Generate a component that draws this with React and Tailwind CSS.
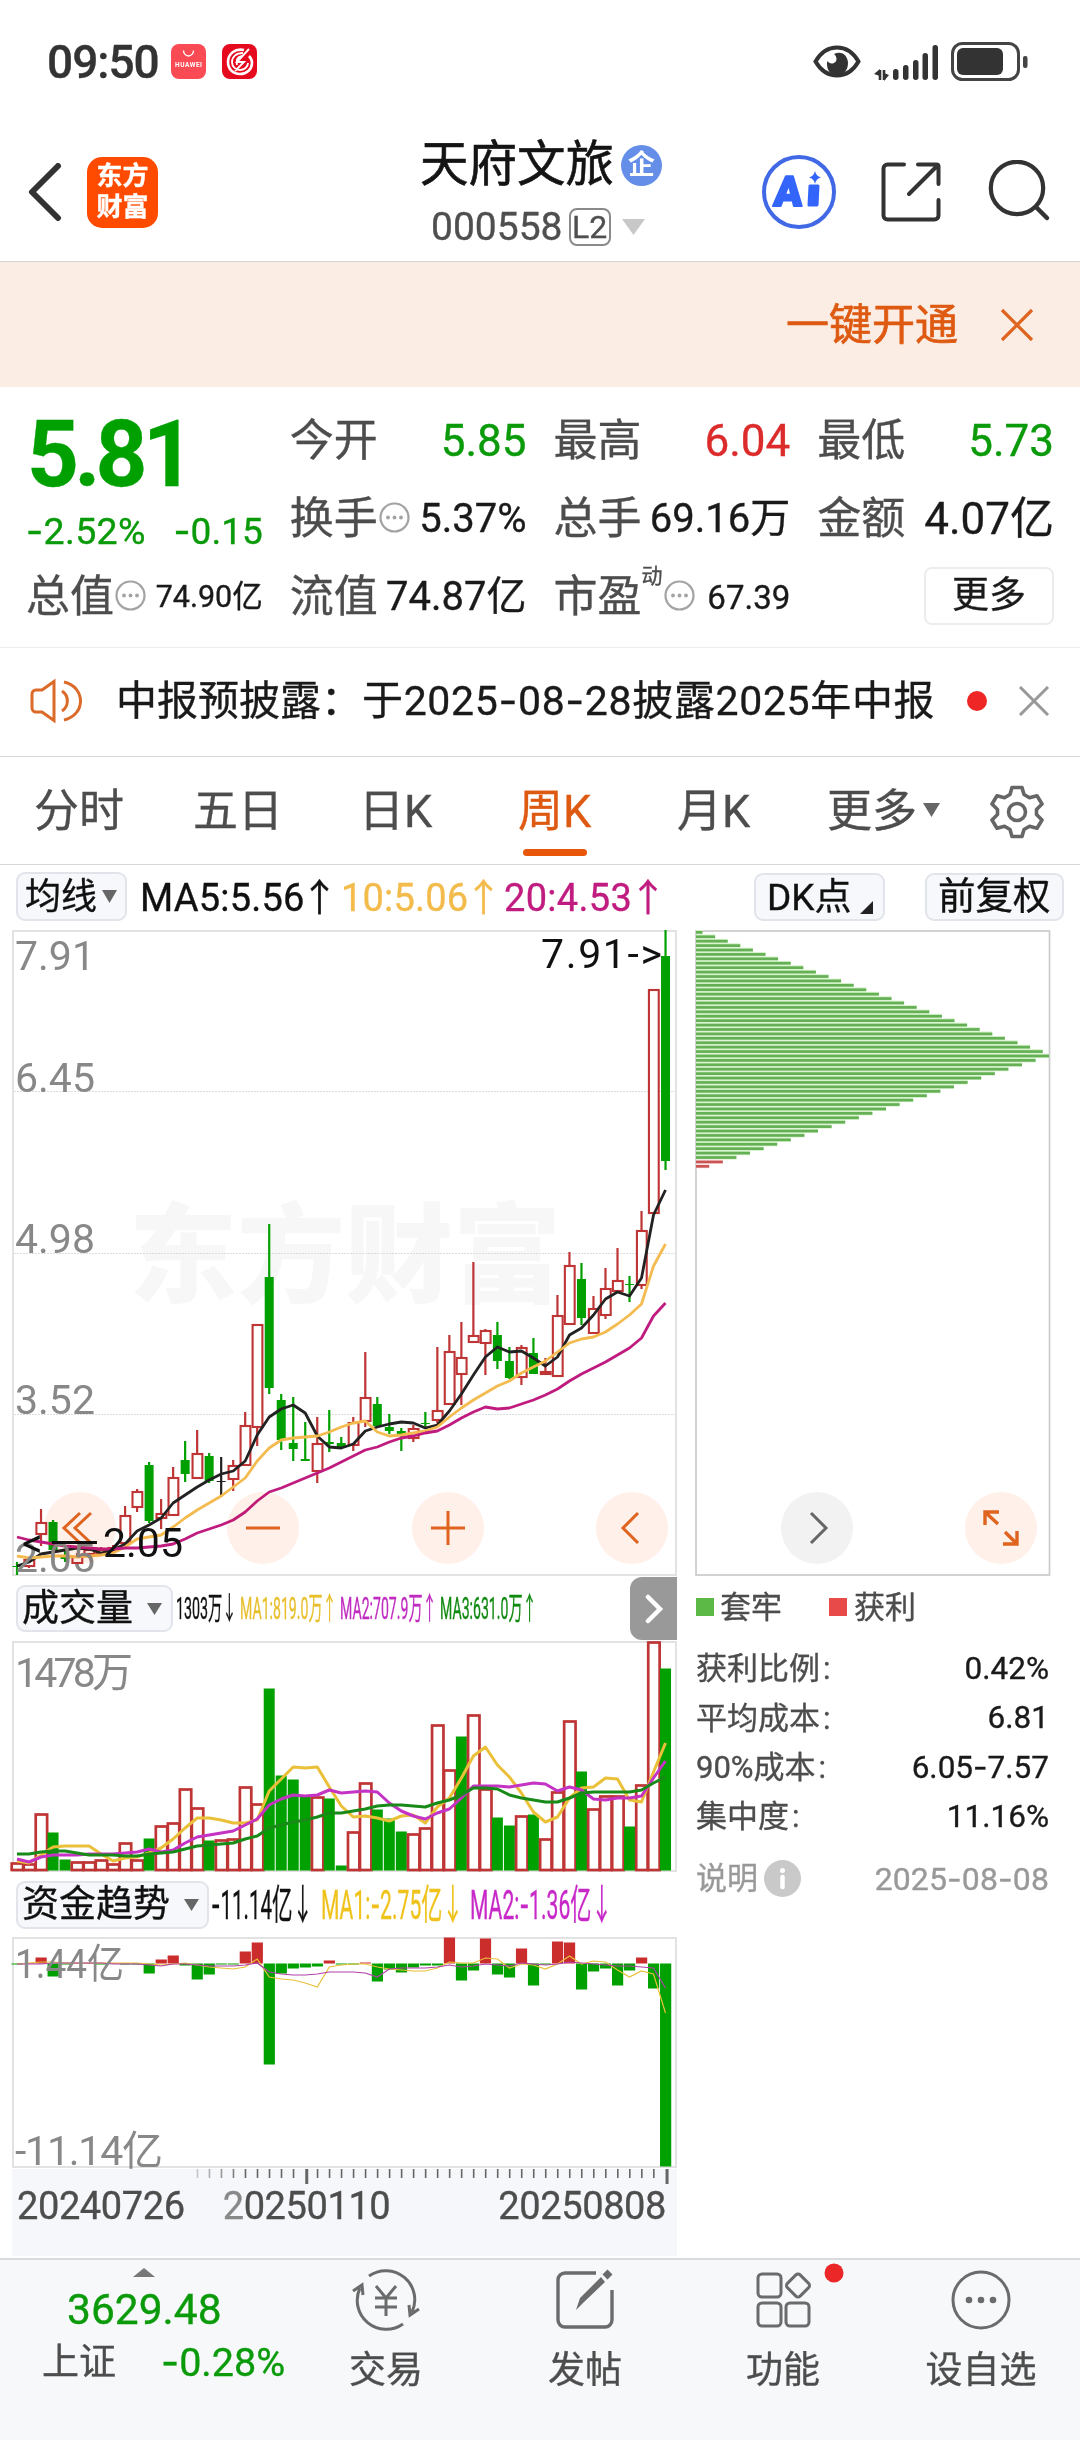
const UP = '#bf3434';
const DOWN = '#00a000';
const STEP = 12.01;

const px = (i) => 5 + i * STEP;
const toLine = (ys) => ys.map((y, i) => `${px(i).toFixed(1)},${y}`).join(' ');

// high, body top, body bottom, low
const candles = [
    [632, 636, 637, 645], [627, 629, 636, 638], [579, 592, 604, 616], [590, 592, 620, 621], [620, 625, 629, 632],
    [623, 626, 633, 635], [617, 619, 624, 626], [617, 619, 623, 626], [615, 617, 620, 624], [576, 585, 613, 616],
    [559, 561, 577, 582], [532, 535, 591, 593], [569, 583, 588, 599], [537, 547, 585, 586], [511, 530, 544, 552],
    [500, 523, 548, 549], [523, 526, 551, 553], [527, 551, 552, 567], [530, 535, 549, 561], [482, 495, 535, 536],
    [394, 394, 497, 516], [294, 347, 458, 464], [464, 470, 510, 520], [467, 513, 519, 531], [492, 529, 531, 531],
    [487, 513, 541, 553], [480, 512, 514, 522], [507, 513, 517, 519], [487, 492, 515, 521], [422, 467, 491, 497],
    [467, 474, 496, 498], [484, 497, 501, 504], [498, 501, 504, 521], [495, 498, 508, 512], [482, 493, 494, 497],
    [417, 480, 490, 493], [405, 421, 474, 475], [392, 427, 444, 475], [332, 405, 412, 413], [399, 400, 413, 445],
    [392, 405, 431, 439], [417, 431, 448, 449], [415, 417, 447, 455], [408, 423, 444, 444], [428, 441, 444, 445],
    [365, 385, 446, 446], [322, 335, 394, 394], [333, 349, 388, 395], [366, 378, 403, 404], [338, 358, 385, 389],
    [318, 350, 361, 361], [346, 354, 355, 372], [281, 300, 355, 359], [59, 59, 283, 283], [0, 26, 231, 240],
];
// r = up, g = down, k = unchanged
const candleKinds = 'grrggrrrrrrgrrgrgkrrrggggrggrrgggrgrrrrrggrgrrrgrrrgrrg';

const ma5 = [636, 632, 624, 622, 620, 618, 619, 623, 620, 614, 601, 595, 588, 573, 565, 557, 550, 544, 541, 531, 505, 487, 479, 475, 483, 506, 517, 518, 514, 501, 497, 494, 492, 493, 498, 495, 481, 464, 445, 427, 417, 422, 421, 428, 436, 427, 405, 398, 385, 369, 362, 366, 348, 285, 260];
const ma10 = [626, 628, 627, 626, 626, 627, 626, 625, 623, 617, 609, 607, 605, 597, 588, 580, 573, 566, 557, 548, 531, 518, 510, 508, 507, 506, 502, 497, 493, 491, 502, 506, 505, 503, 501, 497, 487, 478, 470, 463, 456, 451, 443, 437, 431, 422, 413, 409, 407, 402, 394, 385, 374, 336, 314];
const ma20 = [607, 610, 612, 614, 616, 617, 618, 619, 619, 618, 618, 617, 616, 614, 609, 603, 599, 595, 590, 582, 571, 562, 558, 553, 548, 543, 538, 532, 526, 520, 517, 512, 508, 506, 503, 501, 495, 488, 482, 477, 479, 478, 474, 470, 465, 459, 451, 444, 438, 432, 425, 418, 408, 386, 373];

const volumes = [8, 7, 57, 38, 11, 9, 9, 11, 7, 28, 11, 32, 45, 48, 82, 63, 30, 31, 32, 84, 67, 182, 95, 91, 75, 74, 72, 5, 39, 88, 61, 52, 39, 37, 43, 146, 101, 134, 156, 82, 53, 45, 55, 56, 32, 79, 150, 99, 62, 75, 75, 44, 86, 229, 202];
const volumeKinds = 'rrrggrrrrrrgrrrrgrrrrggggrggrrgggrrrrgrrggrgrrrgrrrgrrg';
const volMa1 = [220, 222, 214, 206, 205, 205, 205, 213, 220, 217, 216, 212, 207, 198, 187, 177, 177, 179, 182, 182, 179, 150, 138, 126, 127, 126, 146, 165, 176, 175, 177, 180, 175, 174, 182, 166, 157, 137, 115, 106, 124, 136, 152, 171, 181, 176, 157, 147, 146, 137, 138, 159, 161, 131, 102];
const volMa2 = [218, 221, 216, 214, 214, 214, 213, 213, 213, 212, 211, 208, 211, 209, 202, 196, 194, 192, 190, 184, 178, 164, 158, 154, 155, 154, 149, 152, 151, 150, 151, 162, 170, 175, 178, 172, 168, 157, 145, 145, 145, 146, 144, 142, 143, 150, 146, 149, 158, 159, 157, 157, 155, 137, 120];
const volMa3 = [213, 213, 211, 210, 210, 212, 214, 214, 214, 215, 215, 213, 212, 211, 208, 205, 204, 203, 202, 198, 195, 187, 184, 181, 179, 176, 172, 172, 170, 168, 165, 164, 164, 165, 166, 162, 159, 154, 147, 147, 148, 154, 157, 159, 161, 161, 157, 152, 151, 151, 151, 151, 149, 142, 136];

const flows = [-1, 0.5, 6, -13, -1, 0.5, 0.5, -1, 0.5, -1, -1, -10, 4, 8, -2, -16, -11, -1, -1, 12, 21, -101, -10, -5, -4, -3, 3, -1, -1, 1, -18, -6, -9, -4, -2, -2, 26, -17, -7, 25, -11, -14, 15, -22, -1, 22, 21, -26, -8, -5, -22, -7, 6, -25, -203];
const flowMa1 = [27, 26, 25, 25, 26, 26, 26, 26, 26, 26, 26, 27, 28, 27, 26, 28, 30, 31, 32, 30, 22, 40, 42, 43, 46, 50, 30, 28, 27, 27, 30, 32, 33, 34, 34, 31, 25, 26, 26, 21, 22, 31, 27, 28, 32, 27, 19, 27, 24, 25, 33, 40, 34, 37, 76];
const flowMa2 = [27, 27, 27, 26, 26, 26, 26, 26, 27, 27, 27, 28, 29, 27, 27, 28, 29, 29, 29, 28, 26, 35, 37, 38, 38, 37, 35, 35, 35, 36, 40, 32, 31, 31, 31, 30, 28, 30, 29, 27, 28, 29, 26, 27, 28, 27, 25, 26, 27, 28, 29, 29, 30, 31, 51];

// chip distribution: rises to bar 28, then falls off
const chips = Array.from({ length: 54 }, (_, i) => (i < 28 ? 6.5 + i * 12.6 : i === 28 ? 353 : 339.6 - (i - 29) * 13.6));

const stats = [
    ['获利比例', '0.42%'],
    ['平均成本', '6.81'],
    ['90%成本', '6.05-7.57'],
    ['集中度', '11.16%'],
];

// hyphens are drawn wider than Roboto's own
const Num = ({ children }) =>
    children.split(/(-)/).map((part, i) => (part === '-' ? <span key={i} className="font-['Inter']">-</span> : part));

const Dots = () => (
    <svg width="31" height="31" viewBox="0 0 31 31" className="shrink-0">
        <circle cx="15.5" cy="15.5" r="14" fill="none" stroke="#a3a3a3" strokeWidth="2.2" />
        {[9, 15.5, 22].map((x) => <circle key={x} cx={x} cy="15.5" r="1.9" fill="#a3a3a3" />)}
    </svg>
);

const Caret = ({ w = 15, h = 12, color = '#666' }) => (
    <svg width={w} height={h} viewBox="0 0 10 10" preserveAspectRatio="none" className="shrink-0">
        <path d="M0 0H10L5 10Z" fill={color} />
    </svg>
);

const StatusBar = () => (
    <div className="h-[123px] flex items-center pl-[47px] pr-[52px] text-[#333]">
        <span className="text-[46px] leading-none font-medium w-[124px] tracking-[-1px]">09:50</span>
        <svg width="35" height="35" viewBox="0 0 35 35">
            <rect width="35" height="35" rx="8" fill="#fa4b55" />
            <path d="M12.500 6.500a5 5.500 0 0 0 10 0" fill="none" stroke="#fff" strokeWidth="1.300" />
            <text x="4" y="22.500" fontSize="6.500" fontWeight="700" fill="#fff" textLength="27">HUAWEI</text>
        </svg>
        <svg width="35" height="35" viewBox="0 0 35 35" className="ml-4">
            <rect width="35" height="35" rx="8" fill="#e60a1e" />
            <path d="M22 6C13 4 6 10 6 18c0 7 5 12 12 12 7 0 12-5 12-11 0-3-1-5-3-7" fill="none" stroke="#fff" strokeWidth="2.600" />
            <path d="M21 9c-7 0-11 4-11 9s4 8 8 8 8-3 8-7M27 5 15 18h7l-9 9M20 12c-5 1-6 4-5 9" fill="none" stroke="#fff" strokeWidth="1.900" />
        </svg>
        <div className="flex items-center ml-auto">
            <svg width="48" height="33" viewBox="0 0 48 33">
                <path d="M2.500 16.500C8 7 15 2.500 24 2.500s16 4.500 21.500 14C40 26 33 30.500 24 30.500S8 26 2.500 16.500Z" fill="none" stroke="#333" strokeWidth="4" />
                <path d="M21 9c8-4 14 2 14 9 0 8-5 12-11 12s-10-4-10-11c0-1 0-2 .5-3 2 4 9 3 9-2 0-2-1-4-2.500-5Z" fill="#333" />
            </svg>
            <svg width="66" height="37" viewBox="0 0 66 37" className="ml-[13px] mt-px">
                <path d="M6 36V26M10 26V36" fill="none" stroke="#333" strokeWidth="2.600" />
                <path d="M6 25V32L0 30ZM10 37V29L15 31Z" fill="#333" />
                {[[19, 25], [29, 21], [39, 16], [48.5, 9], [58.500, 1]].map(([x, y]) => (
                    <rect key={x} x={x} y={y} width="5.500" height={36 - y} rx="2.700" fill="#333" />
                ))}
            </svg>
            <svg width="78" height="39" viewBox="0 0 78 39" className="ml-[11px] -mr-px">
                <rect x="1.500" y="1.500" width="66" height="36" rx="10" fill="none" stroke="#444" strokeWidth="3" />
                <rect x="6" y="6" width="46" height="27" rx="6" fill="#333" />
                <rect x="72" y="14" width="4.500" height="12" rx="2" fill="#444" />
            </svg>
        </div>
    </div>
);

const Header = () => (
    <div className="h-[139px] flex items-center pl-[28px] border-b border-[#d0d4d6]">
        <svg width="34" height="58" viewBox="0 0 34 58">
            <path d="M30 3 4 29 30 55" fill="none" stroke="#333" strokeWidth="6" strokeLinecap="round" strokeLinejoin="round" />
        </svg>
        <div className="ml-[25px] w-[71px] h-[71px] rounded-[15px] bg-[#ff4b00] flex flex-col items-center justify-center text-white text-[26px] leading-[31px] font-bold">
            <span>东方</span>
            <span>财富</span>
        </div>
        <div className="ml-[262px] w-[260px] h-[134px] pt-[6px]">
            <div className="h-16 pt-1 flex items-center gap-[7px] text-[48.500px] leading-none text-[#141414] [-webkit-text-stroke:0.6px_#141414]">
                天府文旅
                <span className="w-[41px] h-[41px] rounded-full bg-[#658ee8] flex items-center justify-center text-white text-[27px] font-bold [-webkit-text-stroke:0]">企</span>
            </div>
            <div className="h-16 flex items-center pl-[11px] text-[39px] leading-none text-[#4f4f4f]">
                000558
                <span className="ml-[6px] w-[42px] h-[38px] border-2 border-[#8a8a8a] rounded-[8px] flex items-center justify-center text-[32px]">L2</span>
                <span className="ml-[11px]"><Caret w={23} h={16} color="#c8c8c8" /></span>
            </div>
        </div>
        <svg width="76" height="76" viewBox="0 0 76 76" className="ml-[81px]">
            <circle cx="38" cy="38" r="35" fill="none" stroke="#4169e6" strokeWidth="4" />
            <g fill="#3465fa" stroke="#3465fa" strokeLinejoin="round">
                <text x="13" y="52" fontSize="42" fontWeight="900" strokeWidth="2" textLength="31" transform="translate(38 38) skewX(-4) translate(-38 -38)">A</text>
                <path d="M49 32H57L56 51H48Z" strokeWidth="3" />
                <path d="M54 17q1 5 6 6.500-5 1-6 6.500-1-5.500-6-6.500 5-1.500 6-6.500Z" strokeWidth="0" />
            </g>
        </svg>
        <svg width="62" height="62" viewBox="0 0 62 62" className="ml-[43px]">
            <path d="M24 3.500H7.500a4 4 0 0 0-4 4v47a4 4 0 0 0 4 4H54.500a4 4 0 0 0 4-4V39M38 3.500H56.500a2 2 0 0 1 2 2V23M57 5 29 33" fill="none" stroke="#333" strokeWidth="4" strokeLinecap="round" />
        </svg>
        <svg width="64" height="64" viewBox="0 0 64 64" className="ml-[45px]">
            <circle cx="30" cy="28" r="26.200" fill="none" stroke="#333" strokeWidth="4.200" />
            <path d="M49 47 60 58" stroke="#333" strokeWidth="4.500" strokeLinecap="round" />
        </svg>
    </div>
);

const Quote = ({ label, value, icon, sup, cls }) => (
    <div className="flex items-center justify-between leading-none">
        <span className="-ml-px flex items-center text-[44px] text-[#4d4d4d] whitespace-nowrap">
            {label}
            {sup && <span className="text-[21px] self-start -mt-[9px]">{sup}</span>}
            {icon && <span className="ml-[1px] -mt-[3px]"><Dots /></span>}
        </span>
        <span className={`whitespace-nowrap ${cls}`}>{value}</span>
    </div>
);

const Quotes = () => (
    <div className="h-[261px] pt-[15px] pl-[27px] pr-[26px] grid grid-cols-4 grid-rows-[78px_78px_78px] gap-x-7 border-b border-[#ececec]">
        <div className="row-span-2 text-[#0a9a0a] leading-none">
            <div className="h-[104px] flex items-center origin-left scale-x-[.975] text-[93px] font-bold tracking-[-5px] text-[#00a000]">5.81</div>
            <div className="h-[50px] flex items-center justify-between text-[37px]">
                <span className="-ml-px text-[37.500px] tracking-[0.3px]"><Num>-2.52%</Num></span>
                <span><Num>-0.15</Num></span>
            </div>
        </div>
        <Quote label="今开" value="5.85" cls="text-[44px] text-[#0a9a0a]" />
        <Quote label="最高" value="6.04" cls="text-[44px] text-[#db2b2b]" />
        <Quote label="最低" value="5.73" cls="text-[44px] text-[#0a9a0a]" />
        <Quote label="换手" icon value="5.37%" cls="text-[40px] text-[#1a1a1a]" />
        <Quote label="总手" value="69.16万" cls="text-[40px] text-[#1a1a1a]" />
        <Quote label="金额" value="4.07亿" cls="text-[44px] text-[#1a1a1a]" />
        <Quote label="总值" icon value="74.90亿" cls="text-[30.500px] text-[#1a1a1a]" />
        <Quote label="流值" value="74.87亿" cls="text-[40px] text-[#1a1a1a]" />
        <Quote label="市盈" sup="动" icon value="67.39" cls="text-[33px] text-[#1a1a1a]" />
        <div className="flex items-center justify-end">
            <button className="w-[130px] h-[58px] -mt-[3px] rounded-[8px] border-2 border-[#ebeced] text-[37px] leading-none text-[#1a1a1a]">更多</button>
        </div>
    </div>
);

const News = () => (
    <div className="h-[109px] pb-[2px] flex items-center pl-[30px] pr-[30px] border-b border-[#d8d8d8]">
        <svg width="54" height="44" viewBox="0 0 54 44">
            <path d="M24 2.500 12 11H6a4 4 0 0 0-4 4v14a4 4 0 0 0 4 4h6l12 8.500ZM32 12a12 12 0 0 1 0 20M34 3c22 5 22 33 0 38" fill="none" stroke="#dc6a28" strokeWidth="3" />
        </svg>
        <span className="ml-[32px] w-[819px] text-[41px] leading-none text-[#1a1a1a] whitespace-nowrap">
            中报预披露：<span className="tracking-[0.65px]"><Num>于2025-08-28披露2025年中报</Num></span>
        </span>
        <span className="ml-[32px] w-5 h-5 rounded-full bg-[#ef2626]" />
        <svg width="32" height="30" viewBox="0 0 32 30" className="ml-auto">
            <path d="M2 1 30 29M30 1 2 29" stroke="#999" strokeWidth="3" />
        </svg>
    </div>
);

const Gear = () => (
    <svg width="54" height="54" viewBox="0 0 54 54" fill="none" stroke="#666" strokeWidth="3.600" strokeLinejoin="round">
        <path d="M22 2.500h10l2 7 5.500 3.200 7.500-2 5 8.300-5.500 5.500v5l5.500 5.500-5 8.300-7.500-2-5.500 3.200-2 7H22l-2-7-5.500-3.200-7.500 2-5-8.300 5.500-5.500v-5L2 19l5-8.300 7.500 2L20 9.500Z" />
        <circle cx="27" cy="27" r="8.500" />
    </svg>
);

const Tabs = () => (
    <div className="h-[108px] pt-[2px] flex items-center text-[45px] leading-none text-[#4d4d4d] border-b border-[#d8d8d8] whitespace-nowrap">
        <span className="ml-[34px] w-[159px]">分时</span>
        <span className="w-[166px]">五日</span>
        <span className="w-[159px]">日K</span>
        <span className="w-[159px] h-full flex items-center relative text-[#de5a12]">
            周K
            <i className="absolute left-[5px] bottom-[8px] w-[64px] h-[7px] rounded-full bg-[#e8560a]" />
        </span>
        <span className="w-[150px]">月K</span>
        <span className="w-[163px] flex items-center gap-[6px]">更多<span className="-mt-[3px]"><Caret w={17} h={14} /></span></span>
        <Gear />
    </div>
);

const chip = 'shrink-0 flex items-center border-2 border-[#e1e4ea] bg-[#f6f8fb] rounded-[9px] leading-none text-[#111] whitespace-nowrap';

const Averages = () => (
    <div className="h-[65px] pt-[7px] pl-4 flex items-start text-[38px]">
        <div className={`${chip} w-[111px] h-[49px] pl-[7px] gap-[5px] text-[36px]`}>均线<Caret w={15} h={13} /></div>
        <div className="ml-[13px] w-[613px] h-[51px] flex items-center leading-none whitespace-nowrap">
            <span className="w-[201px] text-[#111] tracking-[0.2px]">MA5:5.56<i className="not-italic -ml-[4px]">↑</i></span>
            <span className="w-[163px] text-[#f3bb4b] tracking-[0.2px]">10:5.06<i className="not-italic -ml-[4px]">↑</i></span>
            <span className="text-[#c01c80] tracking-[0.3px]">20:4.53<i className="not-italic -ml-[3px]">↑</i></span>
        </div>
        <div className="ml-px flex mt-px">
            <div className={`${chip} w-[131px] h-[48px] pl-[11px] text-[37px]`}>
                DK点
                <svg width="13" height="13" viewBox="0 0 13 13" className="self-end mb-[5px] ml-[8px]"><path d="M13 0V13H0Z" fill="#222" /></svg>
            </div>
            <div className={`${chip} ml-10 w-[139px] h-[48px] pl-[11px] text-[37.500px]`}>前复权</div>
        </div>
    </div>
);

const Frame = ({ h }) => <rect x="1" y="1" width="663" height={h - 2} fill="none" stroke="#e2e2e2" strokeWidth="2" />;

const CandleChart = () => (
    <svg width="665" height="646" className="block overflow-visible" fontFamily="Roboto, 'Noto Sans CJK SC', sans-serif">
        <text x="117" y="364" fontSize="108" fontWeight="900" fill="#f7f7f7">东方财富</text>
        <Frame h={646} />
        {[161.5, 323.5, 484.5].map((y) => <path key={y} d={`M2 ${y}H663`} stroke="#dcdcdc" strokeDasharray="2 1" />)}
        {candles.map(([hi, top, bottom, lo], i) => {
            const kind = candleKinds[i];
            const color = kind === 'r' ? UP : kind === 'g' ? DOWN : '#222';
            const x = px(i);
            return (
                <g key={i}>
                    <path d={`M${x} ${hi}V${top}M${x} ${bottom}V${lo}`} stroke={color} strokeWidth="2.200" />
                    {kind === 'r'
                        ? <rect x={x - 4.600} y={top + 1} width="9.800" height={Math.max(bottom - top - 1, 1)} fill="#fff" stroke={color} strokeWidth="2.100" />
                        : <rect x={x - 4.500} y={top} width="9" height={bottom - top} fill={color} />}
                </g>
            );
        })}
        <g fill="none" strokeWidth="2.800" strokeLinejoin="round">
            <polyline points={toLine(ma5)} stroke="#222" />
            <polyline points={toLine(ma10)} stroke="#f3bb50" />
            <polyline points={toLine(ma20)} stroke="#c01c80" />
        </g>
        <g fontSize="41" fill="#888">
            <text x="3" y="40">7.91</text>
            <text x="3" y="162">6.45</text>
            <text x="3" y="323">4.98</text>
            <text x="3" y="484">3.52</text>
            <text x="3" y="642">2.05</text>
        </g>
        <g fontSize="41" fill="#111">
            <text x="529" y="38" textLength="121">7.91-&gt;</text>
            <text x="10" y="627">&lt;</text>
            <text x="35" y="627" textLength="54" lengthAdjust="spacingAndGlyphs">—</text>
            <text x="91" y="627">2.05</text>
        </g>
    </svg>
);

const Round = ({ x, gray, children }) => (
    <svg width="72" height="72" viewBox="-36 -36 72 72" style={{ left: x }} className="absolute top-[562px] mix-blend-multiply" fill="none" stroke={gray ? '#666' : '#de6420'} strokeWidth="3">
        <circle r="36" fill={gray ? '#f2f2f2' : '#fff0e9'} stroke="none" />
        {children}
    </svg>
);

const Controls = () => (
    <>
        <Round x={43.5}><path d="M0-15-16 0 0 15M11-15-5 0 11 15" /></Round>
        <Round x={227}><path d="M-17 0H17" /></Round>
        <Round x={412}><path d="M-17 0H17M0-17V17" /></Round>
        <Round x={596}><path d="M6-15-9 0 6 15" /></Round>
        <Round x={781} gray><path d="M-6-15 9 0-6 15" /></Round>
        <Round x={965}><path d="M-16-3V-16H-2M-16-16-3-4M4 4 16 16M16 3V16H2" strokeWidth="3.400" /></Round>
    </>
);

const VolumeHeader = () => (
    <div className="h-[65px] flex items-center relative">
        <div className={`${chip} ml-[4px] w-[157px] h-[47px] pl-[4px] text-[37px] gap-[14px]`}>成交量<Caret /></div>
        <div className="ml-[3px] flex text-[31px] leading-none whitespace-nowrap">
            <span className="w-[64px] text-[#111]"><i className="not-italic inline-block origin-left scale-x-[.46]">1303万↓</i></span>
            <span className="w-[100px] text-[#e8bf2d]"><i className="not-italic inline-block origin-left scale-x-[.455]">MA1:819.0万↑</i></span>
            <span className="w-[100px] text-[#c02cc0]"><i className="not-italic inline-block origin-left scale-x-[.455]">MA2:707.9万↑</i></span>
            <span className="w-[97px] text-[#118a11]"><i className="not-italic inline-block origin-left scale-x-[.455]">MA3:631.0万↑</i></span>
        </div>
        <div className="absolute right-0 top-px w-[47px] h-[63px] rounded-l-[12px] bg-[#999] flex items-center justify-center">
            <svg width="20" height="30" viewBox="0 0 20 30"><path d="M4 3 16 15 4 27" fill="none" stroke="#fff" strokeWidth="4.500" strokeLinecap="round" /></svg>
        </div>
    </div>
);

const VolumeChart = () => (
    <svg width="665" height="231" className="block overflow-visible" fontFamily="Roboto, 'Noto Sans CJK SC', sans-serif">
        <Frame h={231} />
        <text x="3" y="46" fontSize="41" fill="#888" textLength="118">1478万</text>
        {volumes.map((v, i) => (volumeKinds[i] === 'r'
            ? <rect key={i} x={px(i) - 5.300} y={230.500 - v} width="11.400" height={v - 1.500} fill="#fff" stroke="#bf3434" strokeWidth="2.700" />
            : <rect key={i} x={px(i) - 5.500} y={229.500 - v} width="11" height={v} fill={DOWN} />
        ))}
        <g fill="none" strokeWidth="3" strokeLinejoin="round">
            <polyline points={toLine(volMa1)} stroke="#e9c038" />
            <polyline points={toLine(volMa2)} stroke="#c433c4" />
            <polyline points={toLine(volMa3)} stroke="#188a18" />
        </g>
    </svg>
);

const FlowHeader = () => (
    <div className="h-[65px] flex items-center">
        <div className={`${chip} ml-[4px] w-[193px] h-[48px] pl-[4px] text-[37px] gap-[14px]`}>资金趋势<Caret /></div>
        <div className="ml-[2px] flex text-[41px] leading-none whitespace-nowrap">
            <span className="w-[110px] text-[#111]"><i className="not-italic inline-block origin-left scale-x-50"><Num>-11.14亿↓</Num></i></span>
            <span className="w-[149px] text-[#efc21c]"><i className="not-italic inline-block origin-left scale-x-[.515]"><Num>MA1:-2.75亿↓</Num></i></span>
            <span className="w-[145px] text-[#c728c7]"><i className="not-italic inline-block origin-left scale-x-[.515]"><Num>MA2:-1.36亿↓</Num></i></span>
        </div>
    </div>
);

const FlowChart = () => (
    <svg width="665" height="232" className="block overflow-visible" fontFamily="Roboto, 'Noto Sans CJK SC', sans-serif">
        <Frame h={231} />
        {flows.map((v, i) => (
            <rect key={i} x={px(i) - 5.500} y={v > 0 ? 26.500 - v : 26.500} width="11.200" height={Math.abs(v)} fill={v > 0 ? '#cb2d2d' : DOWN} />
        ))}
        <g fill="none" strokeWidth="1.200">
            <polyline points={toLine(flowMa1)} stroke="#e9c038" />
            <polyline points={toLine(flowMa2)} stroke="#b040a8" />
        </g>
        <g fontSize="41" fill="#888">
            <text x="3" y="41" textLength="109" lengthAdjust="spacingAndGlyphs">1.44亿</text>
            <text x="3" y="228" textLength="148">-11.14亿</text>
        </g>
    </svg>
);

const DateAxis = () => (
    <div className="h-[87px] bg-[#f6f7fa]">
        <svg width="665" height="16" className="block">
            {Array.from({ length: 40 }, (_, k) => k + 15).map((i) => {
                const major = i === 24 || i === 54;
                return <rect key={i} x={px(i) - (major ? 0.5 : 1) + 0.5} y="0" width={major ? 3 : 1.600} height={major ? 15 : 9} fill="#666" opacity={Math.min(1, (i - 13) / 6)} />;
            })}
        </svg>
        <div className="h-[42px] flex items-center text-[38px] leading-none tracking-[-0.4px] text-[#4d4d4d]">
            <span className="ml-[5px]">20240726</span>
            <span className="ml-[38px] w-[168px]"><span className="text-[#888]">2</span>0250110</span>
            <span className="ml-auto mr-[11px]">20250808</span>
        </div>
    </div>
);

const ChipChart = () => (
    <svg width="356" height="646" className="block">
        <rect x="1" y="1" width="353.500" height="644" fill="none" stroke="#cbcbcb" strokeWidth="1.700" />
        {chips.map((w, i) => (
            <g key={i}>
                <rect x="1" y={i * 4.415} width={w} height="4.400" fill={i < 52 ? '#d3f2c8' : '#fbe3e3'} />
                <rect x="1" y={1 + i * 4.415} width={w} height="2.700" fill={i < 52 ? '#65af55' : '#c95454'} />
            </g>
        ))}
    </svg>
);

const ChipStats = () => (
    <div className="pl-px pr-[2px] text-[31px] leading-none text-[#4d4d4d]">
        <div className="h-[62px] flex items-center">
            <i className="w-[18px] h-[18px] bg-[#5cb946]" />
            <span className="ml-[6px] w-[109px]">套牢</span>
            <i className="w-[18px] h-[18px] bg-[#e84a4a]" />
            <span className="ml-[7px]">获利</span>
        </div>
        <div className="pt-[6px]">
            {stats.map(([label, value]) => (
                <div key={label} className="h-[49.400px] flex items-center justify-between">
                    <span>{label}<i className="not-italic ml-[3px]">:</i></span>
                    <span className="text-[31.500px] text-[#1a1a1a]"><Num>{value}</Num></span>
                </div>
            ))}
        </div>
        <div className="mt-[17px] h-[40px] flex items-center text-[#999]">
            说明
            <svg width="37" height="37" viewBox="0 0 37 37" className="ml-[6px]">
                <circle cx="18.500" cy="18.500" r="18.500" fill="#c9c9c9" />
                <circle cx="18.500" cy="10.500" r="2.500" fill="#fff" />
                <path d="M18.500 17V27" stroke="#fff" strokeWidth="4.500" strokeLinecap="round" />
            </svg>
            <span className="ml-auto text-[32px] tracking-[0.1px]"><Num>2025-08-08</Num></span>
        </div>
    </div>
);

const NavItem = ({ label, children }) => (
    <div className="flex flex-col items-center">
        <svg width="68" height="68" viewBox="-34 -34 68 68" fill="none" stroke="#6b6b6b" strokeWidth="3" className="overflow-visible">{children}</svg>
        <span className="mt-[18px] text-[37px] leading-none whitespace-nowrap">{label}</span>
    </div>
);

const BottomNav = () => (
    <div className="h-[182px] flex pt-[6px] bg-[#f6f8fa] border-t-2 border-[#d8dbde] text-[#4d4d4d]">
        <div className="w-[323px] pt-[2px] leading-none">
            <svg width="22" height="9" viewBox="0 0 22 9" className="ml-[133px]"><path d="M0 9 11 0 22 9Z" fill="#777" /></svg>
            <div className="h-[67px] flex items-center pl-[67px] text-[42.500px] text-[#0a9a0a]">3629.48</div>
            <div className="h-[37px] flex items-center pl-[42px] text-[37px]">
                上证
                <span className="ml-[45px] text-[39.500px] text-[#0a9a0a]"><Num>-0.28%</Num></span>
            </div>
        </div>
        <div className="w-[126px]">
            <NavItem label="交易">
                <path d="M-17-24A29 29 0 0 1 26 12M17 24A29 29 0 0 1-26-12M-33-9-24-15-23-5M33 9 24 15 23 5" />
                <path d="M-10-14 0-2 10-14M0-2V16M-11-2H11M-11 7H11" />
            </NavItem>
        </div>
        <div className="ml-[73px] w-[126px]">
            <NavItem label="发帖">
                <path d="M11-27H-20A7 7 0 0 0-27-20V20A7 7 0 0 0-20 27H20A7 7 0 0 0 27 20V-10" strokeWidth="3.400" />
                <path d="M-9 10-5-2 16-23 20-18-2 3Z" fill="#6b6b6b" stroke="none" />
                <path d="M20-23 25-28" strokeWidth="7" />
            </NavItem>
        </div>
        <div className="ml-[72px] w-[126px]">
            <NavItem label="功能">
                <rect x="-25" y="-26" width="23" height="23" rx="4" />
                <rect x="-25" y="3" width="23" height="23" rx="4" />
                <rect x="3" y="3" width="23" height="23" rx="4" />
                <rect x="-9" y="-9" width="18" height="18" rx="3" transform="translate(15 -14.500) rotate(45)" />
                <circle cx="51" cy="-27" r="9.500" fill="#ec2727" stroke="none" />
            </NavItem>
        </div>
        <div className="ml-[72px] w-[126px]">
            <NavItem label="设自选">
                <circle r="28" />
                {[-12, 0, 12].map((x) => <circle key={x} cx={x} r="3.300" fill="#6b6b6b" stroke="none" />)}
            </NavItem>
        </div>
    </div>
);

const App = () => (
    <div className="w-[1080px] h-[2440px] bg-white overflow-hidden font-['Roboto','Noto_Sans_CJK_SC',sans-serif] [-webkit-text-stroke-width:0.35px]">
        <StatusBar />
        <Header />
        <div className="h-[125px] flex items-center justify-end pr-[46px] bg-[#fcede4] text-[#de5a12]">
            <span className="mt-[2px] text-[43px] leading-none [-webkit-text-stroke:0.7px_#de5a12]">一键开通</span>
            <svg width="34" height="34" viewBox="0 0 34 34" className="ml-[42px]"><path d="M2 2 32 32M32 2 2 32" stroke="#de6420" strokeWidth="3.200" /></svg>
        </div>
        <Quotes />
        <News />
        <Tabs />
        <Averages />
        <div className="relative h-[1328px] flex pl-3 gap-[18px]">
            <div className="w-[665px]">
                <CandleChart />
                <VolumeHeader />
                <VolumeChart />
                <FlowHeader />
                <FlowChart />
                <DateAxis />
            </div>
            <div className="w-[356px]">
                <ChipChart />
                <ChipStats />
            </div>
            <Controls />
        </div>
        <BottomNav />
    </div>
);

export default App;
